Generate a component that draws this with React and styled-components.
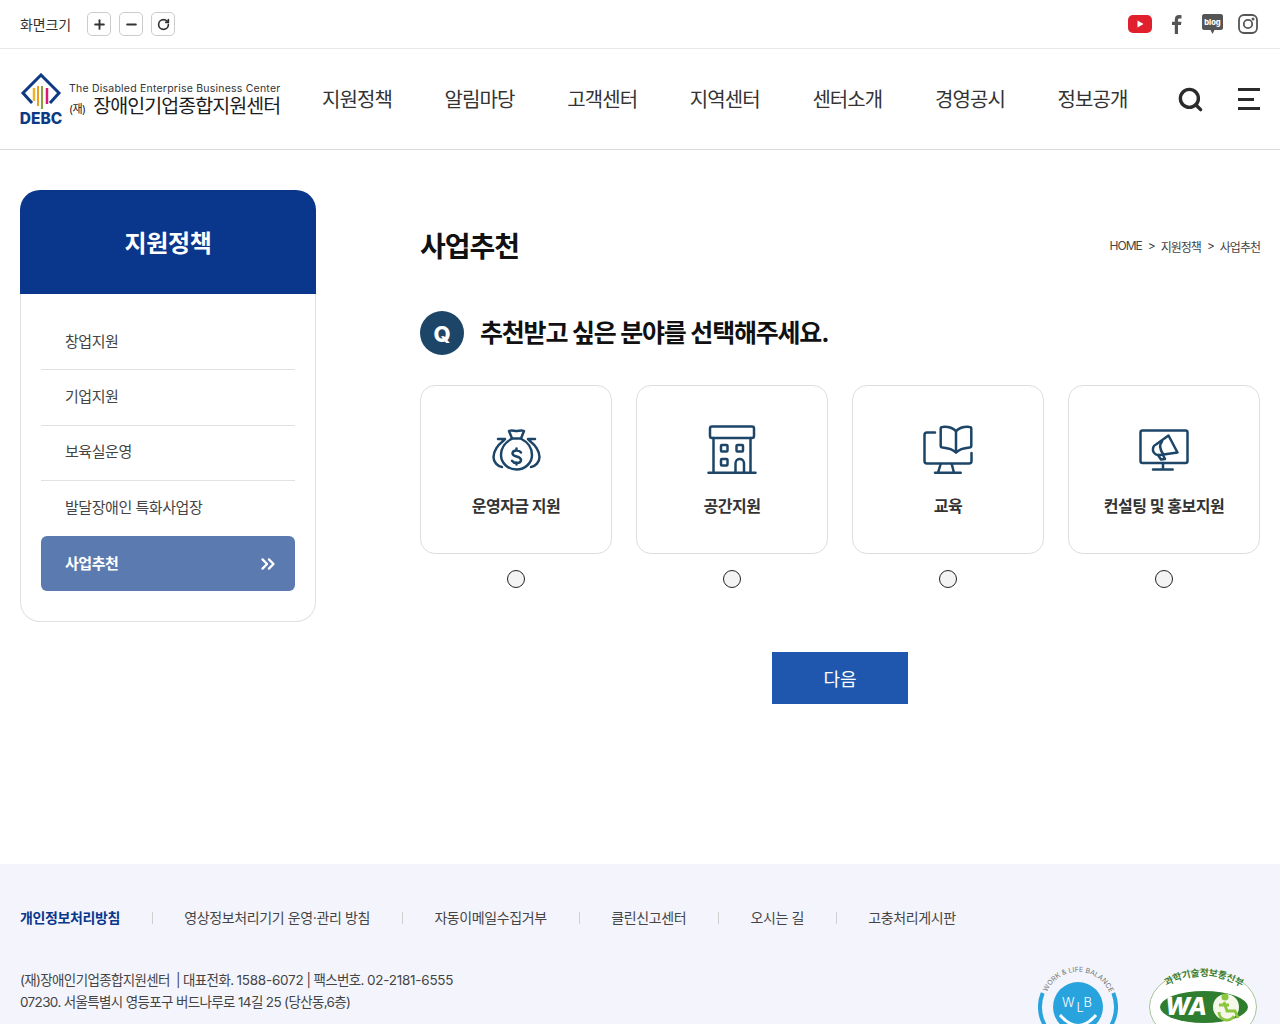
import React from 'react';
import styled, { createGlobalStyle } from 'styled-components';
import { Plus, Minus, RotateCw, Search, ChevronsRight } from 'lucide-react';

const GlobalStyle = createGlobalStyle`
  html, body {
    margin: 0;
    padding: 0;
    background: #fff;
    color: #333;
    font-family: Inter, "Noto Sans CJK KR", sans-serif;
    overflow-x: hidden;
  }
  * { box-sizing: border-box; }
`;

const TopBar = styled.div`
  height: 49px;
  padding: 0 20px;
  display: flex;
  align-items: center;
  justify-content: space-between;
  border-bottom: 1px solid #e8e8e8;
`;

const ZoomGroup = styled.div`
  display: flex;
  align-items: center;
`;

const ZoomLabel = styled.span`
  font-size: 14px;
  letter-spacing: -0.1px;
  color: #333;
  margin-right: 16px;
`;

const ZoomButton = styled.button`
  width: 24px;
  height: 24px;
  margin-right: 8px;
  padding: 0;
  display: flex;
  align-items: center;
  justify-content: center;
  background: #fff;
  border: 1px solid #ccc;
  border-radius: 5px;
  color: #333;
`;

const SnsGroup = styled.div`
  display: flex;
  align-items: center;
  gap: 15px;
  margin-right: 2px;
`;

const Header = styled.header`
  height: 101px;
  padding: 0 20px;
  display: flex;
  align-items: center;
  border-bottom: 1px solid #d9d9d9;
`;

const Logo = styled.a`
  width: 262px;
  display: flex;
  align-items: flex-start;
  flex: none;
`;

const LogoMark = styled.div`
  width: 42px;
  flex: none;
  display: flex;
  flex-direction: column;
  align-items: center;
`;

const LogoInitials = styled.span`
  font-size: 15.5px;
  line-height: 14px;
  font-weight: 800;
  color: #0d3a84;
  margin-top: -1px;
`;

const LogoText = styled.div`
  margin: 9px 0 0 7px;
  white-space: nowrap;
`;

const LogoEnglish = styled.div`
  font-size: 10.5px;
  line-height: 13px;
  color: #333;
  letter-spacing: 0.22px;
`;

const LogoKorean = styled.div`
  font-size: 19.5px;
  line-height: 20px;
  color: #1c1c1c;
  letter-spacing: -0.95px;
  margin-top: 1px;

  small {
    font-size: 11px;
    letter-spacing: -0.6px;
    margin-right: 8px;
  }
`;

const Nav = styled.nav`
  display: flex;
  margin-left: 40px;
  padding-top: 2px;
  gap: 52.6px;
`;

const NavItem = styled.a`
  font-size: 20px;
  line-height: 28px;
  letter-spacing: -0.9px;
  color: #333;
  white-space: nowrap;
`;

const HeaderTools = styled.div`
  margin-left: auto;
  display: flex;
  align-items: center;
  gap: 34px;
  color: #2b2b2b;
`;

const MenuLines = styled.div`
  width: 22px;
  height: 22px;
  display: flex;
  flex-direction: column;
  justify-content: space-between;

  span {
    display: block;
    height: 3px;
    background: #2b2b2b;
  }
  span:nth-child(2) {
    width: 16px;
  }
`;

const Main = styled.main`
  padding: 40px 20px 0;
  height: 714px;
  display: flex;
  align-items: flex-start;
`;

const Sidebar = styled.aside`
  width: 296px;
  flex: none;
`;

const SideTitle = styled.h2`
  margin: 0;
  height: 104px;
  display: flex;
  align-items: center;
  justify-content: center;
  padding-bottom: 2px;
  background: #0a378c;
  border-radius: 20px 20px 0 0;
  color: #fff;
  font-size: 24px;
  font-weight: 700;
  letter-spacing: -0.3px;
`;

const SideList = styled.ul`
  list-style: none;
  margin: 0;
  padding: 21px 20px 30px;
  border: 1px solid #e2e2e2;
  border-top: 0;
  border-radius: 0 0 20px 20px;
`;

const SideItem = styled.li`
  height: 55.3px;
  padding: 0 16px ${p => (p.$active ? '2px' : '4px')} 24px;
  display: flex;
  align-items: center;
  justify-content: space-between;
  font-size: 15px;
  letter-spacing: -0.45px;
  color: ${p => (p.$active ? '#fff' : '#444')};
  font-weight: ${p => (p.$active ? 700 : 400)};
  background: ${p => (p.$active ? '#5a7ab0' : 'transparent')};
  border-radius: ${p => (p.$active ? '6px' : '0')};
  border-bottom: ${p => (p.$divided ? '1px solid #e2e2e2' : '0')};

  svg {
    margin-top: 2px;
  }
`;

const Content = styled.section`
  margin-left: 104px;
  flex: 1;
`;

const TitleRow = styled.div`
  height: 50px;
  margin-top: 30px;
  display: flex;
  align-items: center;
  justify-content: space-between;
`;

const PageTitle = styled.h1`
  margin: 0;
  font-size: 28px;
  font-weight: 700;
  letter-spacing: -1px;
  color: #111;
`;

const Breadcrumb = styled.div`
  display: flex;
  gap: 6px;
  padding-top: 2px;
  font-size: 12px;
  letter-spacing: -1px;
  color: #444;
`;

const Question = styled.div`
  margin-top: 41px;
  display: flex;
  align-items: center;
  gap: 16px;
`;

const QBadge = styled.span`
  width: 44px;
  height: 44px;
  padding-top: 2px;
  border-radius: 50%;
  background: #1d4568;
  color: #fff;
  display: flex;
  align-items: center;
  justify-content: center;
  font-size: 22px;
  font-weight: 800;
`;

const QText = styled.h3`
  margin: 0;
  padding-bottom: 4px;
  font-size: 25px;
  font-weight: 700;
  letter-spacing: -1.2px;
  color: #111;
`;

const Options = styled.div`
  margin-top: 30px;
  display: grid;
  grid-template-columns: repeat(4, 192px);
  justify-content: space-between;
`;

const Option = styled.label`
  display: flex;
  flex-direction: column;
  align-items: center;
`;

const OptionCard = styled.div`
  width: 100%;
  height: 169px;
  border: 1px solid #dedede;
  border-radius: 15px;
  padding-top: 38px;
  display: flex;
  flex-direction: column;
  align-items: center;
`;

const OptionIcon = styled.svg`
  width: 52px;
  height: 52px;
  fill: none;
  stroke: #1d4568;
  stroke-width: 2.5;
  stroke-linecap: round;
  stroke-linejoin: round;
`;

const OptionName = styled.span`
  margin-top: 18px;
  font-size: 16px;
  line-height: 24px;
  font-weight: 700;
  letter-spacing: -0.5px;
  color: #333;
`;

const Radio = styled.span`
  margin-top: 16px;
  width: 18px;
  height: 18px;
  border-radius: 50%;
  border: 1px solid #222;
  background: #f4f4f4;
`;

const NextRow = styled.div`
  margin-top: 64px;
  display: flex;
  justify-content: center;
`;

const NextButton = styled.button`
  width: 136px;
  height: 52px;
  border: 0;
  background: #1f57ae;
  color: #fff;
  font-family: inherit;
  font-size: 18px;
`;

const Footer = styled.footer`
  background: #f4f5fc;
  padding: 44px 20px 60px;
`;

const FooterLinks = styled.div`
  display: flex;
  align-items: center;
  font-size: 14px;
  line-height: 20px;
  letter-spacing: -0.38px;
  color: #444;
`;

const FooterLink = styled.a`
  color: ${p => (p.$strong ? '#0a378c' : '#444')};
  font-weight: ${p => (p.$strong ? 700 : 400)};
`;

const FooterDivider = styled.i`
  width: 1px;
  height: 12px;
  background: #cfcfcf;
  margin: 0 31.3px 0 32px;
`;

const FooterBottom = styled.div`
  margin-top: 40px;
  display: flex;
  align-items: flex-start;
  justify-content: space-between;
`;

const FooterInfo = styled.p`
  margin: 0;
  padding-top: 1px;
  font-size: 13.5px;
  line-height: 22px;
  letter-spacing: -0.65px;
  color: #444;
`;

const Num = styled.span`
  letter-spacing: -0.25px;
`;

const Certs = styled.div`
  display: flex;
  gap: 31px;
  margin: -8px 3px 0 0;
`;

const MoneyIcon = () => (
  <OptionIcon viewBox="0 0 52 52">
    <path d="M19 7c3-1.500 5 0 7.500 0s4.500-1.500 7.500 0l-3 7.500h-9z" />
    <path d="M21.500 15c-6 3-10.500 9-10.500 16 0 8 7 14.500 15.500 14.500S42 39 42 31c0-7-4.500-13-10.500-16" />
    <path d="M8 15h7l-3 3c-4 3-8.500 9-8.500 15 0 5 4 9.500 8.500 10" />
    <path d="M45 15h-7l3 3c4 3 8.500 9 8.500 15 0 5-4 9.500-8.500 10" />
    <path d="M31 28.500c-1-1.500-2.500-2-4.500-2-2.500 0-4 1.300-4 3 0 4 8.500 2 8.500 6.500 0 1.800-2 3-4.500 3-2 0-3.500-.800-4.500-2.300M26.500 24.500v2M26.500 38.500v2" />
  </OptionIcon>
);

const BuildingIcon = () => (
  <OptionIcon viewBox="0 0 52 52">
    <rect x="4" y="2.500" width="44" height="11.500" rx="2" />
    <path d="M7.500 14v34.500M44.500 14v34.500M2.500 48.700h47" />
    <rect x="15" y="21" width="6.500" height="6.500" rx="1" />
    <rect x="30.500" y="21" width="6.500" height="6.500" rx="1" />
    <rect x="15" y="35" width="6.500" height="6.500" rx="1" />
    <path d="M29.500 48.500V39.500c0-6 8.500-6 8.500 0v9" />
  </OptionIcon>
);

const BookScreenIcon = () => (
  <OptionIcon viewBox="0 0 52 52">
    <path d="M13 8.500H5c-1.500 0-2.500 1-2.500 2.500v26c0 1.500 1 2.500 2.500 2.500h42c1.500 0 2.500-1 2.500-2.500v-8" />
    <path d="M34 7c-4-3.500-9-4.500-13.500-4-1 0-1.800.800-1.800 1.800v17c0 1 .800 1.800 1.800 1.800 5 .500 10 1.500 13.500 5 3.500-3.500 8.500-4.500 13.500-5 1 0 1.800-.800 1.800-1.800v-17c0-1-.800-1.800-1.800-1.800-4.500-.500-9.500.500-13.500 4z" />
    <path d="M34 7v20M18.700 40L16 48.700M29.700 40L32 48.700M13 48.700h25.700" />
  </OptionIcon>
);

const MegaphoneIcon = () => (
  <OptionIcon viewBox="0 0 52 52">
    <rect x="2.500" y="6.500" width="47" height="32.500" rx="2" />
    <path d="M25 39v6.500M15 45.500h19.700" />
    <path d="M30.500 11.500L39.500 28.500 22 31c-3 .500-6.500-1-7-4.500-.500-3 1-5 3-6z" />
    <path d="M24 17.500c-2.500 3-2 8 1 12.500M20 31l3 4.500 4-.500-2-4" />
  </OptionIcon>
);

const options = [
  { name: '운영자금 지원', icon: <MoneyIcon /> },
  { name: '공간지원', icon: <BuildingIcon /> },
  { name: '교육', icon: <BookScreenIcon /> },
  { name: '컨설팅 및 홍보지원', icon: <MegaphoneIcon /> },
];

const navItems = ['지원정책', '알림마당', '고객센터', '지역센터', '센터소개', '경영공시', '정보공개'];
const sideItems = ['창업지원', '기업지원', '보육실운영', '발달장애인 특화사업장'];
const footerLinks = ['영상정보처리기기 운영·관리 방침', '자동이메일수집거부', '클린신고센터', '오시는 길', '고충처리게시판'];

export default function App() {
  return (
    <>
      <GlobalStyle />
      <TopBar>
        <ZoomGroup>
          <ZoomLabel>화면크기</ZoomLabel>
          <ZoomButton type="button"><Plus size={15} strokeWidth={3} /></ZoomButton>
          <ZoomButton type="button"><Minus size={15} strokeWidth={3} /></ZoomButton>
          <ZoomButton type="button"><RotateCw size={13} strokeWidth={3} /></ZoomButton>
        </ZoomGroup>
        <SnsGroup>
          <svg width="24" height="18" viewBox="0 0 24 18">
            <rect width="24" height="18" rx="5" fill="#e0202c" />
            <path d="M9.500 5.500l6 3.500-6 3.500z" fill="#fff" />
          </svg>
          <svg width="20" height="20" viewBox="0.500 0 20 20">
            <path d="M11.500 20v-9h3l.4-3.200h-3.400V6c0-1 .3-1.600 1.700-1.600H15V1.300C14.600 1.200 13.600 1 12.500 1 10 1 8.300 2.500 8.300 5.400v2.400H5.500V11h2.800v9z" fill="#555" />
          </svg>
          <svg width="21" height="20" viewBox="0 0 21 20">
            <path d="M2 0h17c1 0 2 1 2 2v12c0 1-1 2-2 2h-6.500l-2 4-2-4H2c-1 0-2-1-2-2V2C0 1 1 0 2 0z" fill="#555" />
            <text x="10.500" y="10.500" textAnchor="middle" fontSize="7.500" fontWeight="800" fill="#fff" fontFamily="Inter, sans-serif">blog</text>
          </svg>
          <svg width="20" height="20" viewBox="0 0 20 20" fill="none" stroke="#555" strokeWidth="1.800">
            <rect x="1" y="1" width="18" height="18" rx="5" />
            <circle cx="10" cy="10" r="4.200" />
            <circle cx="15" cy="5" r="0.600" fill="#555" />
          </svg>
        </SnsGroup>
      </TopBar>

      <Header>
        <Logo>
          <LogoMark>
            <svg width="42" height="40" viewBox="0 0 42 40" fill="none">
              <path d="M12 30L3 20 21 2l18 18-9 10" stroke="#0d3a84" strokeWidth="3" />
              <path d="M14 15v13" stroke="#f0b428" strokeWidth="2.500" />
              <path d="M18 13v20" stroke="#e8a020" strokeWidth="2" />
              <path d="M22 13v23" stroke="#8aa03c" strokeWidth="2" />
              <path d="M27 15v16" stroke="#d81b78" strokeWidth="2.500" />
            </svg>
            <LogoInitials>DEBC</LogoInitials>
          </LogoMark>
          <LogoText>
            <LogoEnglish>The Disabled Enterprise Business Center</LogoEnglish>
            <LogoKorean><small>(재)</small>장애인기업종합지원센터</LogoKorean>
          </LogoText>
        </Logo>
        <Nav>
          {navItems.map(item => <NavItem key={item}>{item}</NavItem>)}
        </Nav>
        <HeaderTools>
          <Search size={27} strokeWidth={3} />
          <MenuLines><span /><span /><span /></MenuLines>
        </HeaderTools>
      </Header>

      <Main>
        <Sidebar>
          <SideTitle>지원정책</SideTitle>
          <SideList>
            {sideItems.map((item, i) => (
              <SideItem key={item} $divided={i < sideItems.length - 1}>{item}</SideItem>
            ))}
            <SideItem $active>
              사업추천
              <ChevronsRight size={22} strokeWidth={2.500} />
            </SideItem>
          </SideList>
        </Sidebar>

        <Content>
          <TitleRow>
            <PageTitle>사업추천</PageTitle>
            <Breadcrumb>
              <span>HOME</span><span>&gt;</span><span>지원정책</span><span>&gt;</span><span>사업추천</span>
            </Breadcrumb>
          </TitleRow>
          <Question>
            <QBadge>Q</QBadge>
            <QText>추천받고 싶은 분야를 선택해주세요.</QText>
          </Question>
          <Options>
            {options.map(option => (
              <Option key={option.name}>
                <OptionCard>
                  {option.icon}
                  <OptionName>{option.name}</OptionName>
                </OptionCard>
                <Radio />
              </Option>
            ))}
          </Options>
          <NextRow>
            <NextButton type="button">다음</NextButton>
          </NextRow>
        </Content>
      </Main>

      <Footer>
        <FooterLinks>
          <FooterLink $strong>개인정보처리방침</FooterLink>
          {footerLinks.map(link => (
            <React.Fragment key={link}>
              <FooterDivider />
              <FooterLink>{link}</FooterLink>
            </React.Fragment>
          ))}
        </FooterLinks>
        <FooterBottom>
          <FooterInfo>
            (재)장애인기업종합지원센터 &nbsp;| 대표전화. <Num>1588-6072</Num> | 팩스번호. <Num>02-2181-6555</Num><br />
            07230. 서울특별시 영등포구 버드나루로 14길 25 (당산동,6층)
          </FooterInfo>
          <Certs>
            <svg width="80" height="88" viewBox="0 0 80 88" fill="none">
              <path id="wlbArc" d="M8.500 33A34 34 0 0 1 71.500 33" />
              <text fontSize="7" fill="#777" fontFamily="Inter, sans-serif">
                <textPath href="#wlbArc" startOffset="1">WORK &amp; LIFE BALANCE</textPath>
              </text>
              <path d="M4.700 33A38 38 0 0 0 21.200 80M75.300 33A38 38 0 0 1 58.800 80" stroke="#29a3de" strokeWidth="4" />
              <circle cx="40" cy="47" r="25" fill="#29a3de" />
              <text fill="#fff" fontSize="13" fontWeight="300" fontFamily="Inter, sans-serif">
                <tspan x="24" y="47">W</tspan>
                <tspan x="38.500" y="52">L</tspan>
                <tspan x="45.500" y="47">B</tspan>
              </text>
              <path d="M22 55Q40 76 58 55" stroke="#fff" strokeWidth="3" />
            </svg>
            <svg width="108" height="88" viewBox="0 0 108 88" fill="none">
              <ellipse cx="54" cy="47" rx="53.500" ry="37" fill="#fff" stroke="#a8c49a" />
              <path id="waArc" d="M14 28Q54 4 94 28" />
              <text fontSize="9.500" fontWeight="700" fill="#3a7d34" fontFamily="'Noto Sans CJK KR', sans-serif">
                <textPath href="#waArc" startOffset="4">과학기술정보통신부</textPath>
              </text>
              <ellipse cx="55" cy="47" rx="44" ry="16" fill="#2f7d2f" />
              <text x="37" y="55" textAnchor="middle" fontSize="24" fontWeight="800" fontStyle="italic" fill="#fff" fontFamily="Inter, sans-serif">WA</text>
              <circle cx="77" cy="47" r="13" fill="#f4f8ea" />
              <circle cx="76" cy="37" r="3.500" fill="#8cc63f" />
              <path d="M75 42l3 9h8l3 7M80 45H70M70 52a8 8 0 0 0 15 4" stroke="#8cc63f" strokeWidth="2.800" />
              <text x="54" y="72" textAnchor="middle" fontSize="9" fontWeight="800" fill="#222" fontFamily="Inter, sans-serif">WEB ACCESSIBILITY</text>
            </svg>
          </Certs>
        </FooterBottom>
      </Footer>
    </>
  );
}
